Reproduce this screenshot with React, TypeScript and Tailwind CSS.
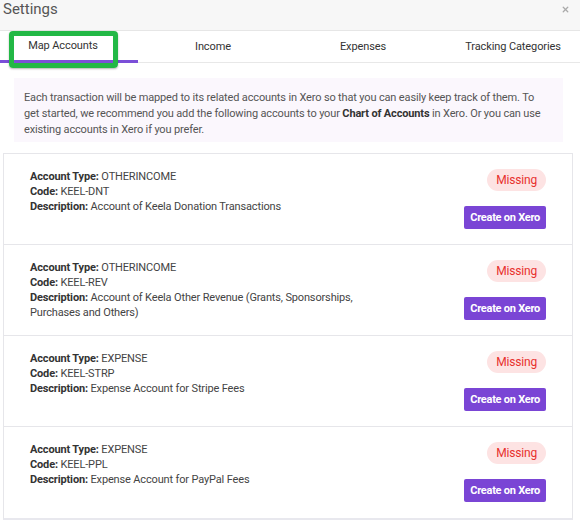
import { X } from 'lucide-react'

const accounts = [
  { type: 'OTHERINCOME', code: 'KEEL-DNT', desc: 'Account of Keela Donation Transactions' },
  { type: 'OTHERINCOME', code: 'KEEL-REV', desc: 'Account of Keela Other Revenue (Grants, Sponsorships, Purchases and Others)' },
  { type: 'EXPENSE', code: 'KEEL-STRP', desc: 'Expense Account for Stripe Fees' },
  { type: 'EXPENSE', code: 'KEEL-PPL', desc: 'Expense Account for PayPal Fees' },
]

const tabs = ['Map Accounts', 'Income', 'Expenses', 'Tracking Categories']

function AccountRow({ type, code, desc, last }: { type: string; code: string; desc: string; last: boolean }) {
  return (
    <div className={`flex justify-between pl-[26px] pr-[26px] pt-[15px] pb-[15px] h-[91px] ${last ? '' : 'border-b border-[#e6e6ea]'}`}>
      <div className="text-[11px] leading-[15px] text-[#444] w-[330px] tracking-[-0.15px]">
        <div><span className="font-bold text-[#333]">Account Type:</span> {type}</div>
        <div><span className="font-bold text-[#333]">Code:</span> {code}</div>
        <div><span className="font-bold text-[#333]">Description:</span> {desc}</div>
      </div>
      <div className="flex flex-col items-end gap-[15px]">
        <span className="h-[22px] px-[9px] rounded-full bg-[#fde3e3] text-[#e8312e] text-[12px] leading-[22px] tracking-[-0.2px]">
          Missing
        </span>
        <button className="h-[23px] px-[6px] rounded-[2px] bg-[#7a45d5] text-white text-[11px] font-bold leading-[23px] tracking-[-0.25px]">
          Create on Xero
        </button>
      </div>
    </div>
  )
}

export default function App() {
  return (
    <div className="relative w-[580px] h-[524px] bg-white overflow-hidden" style={{ fontFamily: 'Roboto, "Liberation Sans", sans-serif' }}>
      {/* Header */}
      <div className="flex items-start justify-between h-[31px] bg-[#f7f7f7] border-b border-[#e6e6e6] pl-[3px] pr-[10px]">
        <span className="text-[15px] leading-[18px] text-[#555]">Settings</span>
        <X className="w-[9px] h-[9px] text-[#aaa] mt-[5px]" strokeWidth={3.5} />
      </div>

      {/* Tabs */}
      <div className="flex h-[32px] border-b border-[#e8e8e8] ml-[-12px]">
        {tabs.map((t, i) => (
          <div
            key={t}
            className={
              i === 0
                ? 'w-[150px] shrink-0 flex items-center justify-center text-[11px] tracking-[-0.1px] text-[#333] border-b-[3px] border-[#7b4fd8] -mb-[1px] pt-[2px]'
                : 'w-[150px] shrink-0 flex items-center justify-center text-[11px] tracking-[-0.1px] text-[#333] pt-[1px]'
            }
          >
            {t}
          </div>
        ))}
      </div>

      {/* Intro */}
      <div className="mx-[14px] mt-[15px] bg-[#fbf7fd] pl-[10px] pr-[12px] pt-[12px] pb-[4px] text-[11px] leading-[16px] tracking-[-0.15px] text-[#555] w-[549px]">
        Each transaction will be mapped to its related accounts in Xero so that you can easily keep track of them. To get started, we recommend you add the following accounts to your <span className="font-bold text-[#333]">Chart of Accounts</span> in Xero. Or you can use existing accounts in Xero if you prefer.
      </div>

      {/* Account list */}
      <div className="mx-[3px] mt-[11px] w-[570px] border border-[#e6e6ea] border-b-[2px] border-b-[#e8e8ee]">
        {accounts.map((a, i) => (
          <AccountRow key={a.code} {...a} last={i === accounts.length - 1} />
        ))}
      </div>

      {/* highlight annotation */}
      <div className="absolute left-[9px] top-[31px] w-[109px] h-[37px] rounded-[4px] border-[5px] border-[#22b845] shadow-[0_1px_2px_rgba(0,0,0,0.3)] pointer-events-none" />
    </div>
  )
}
